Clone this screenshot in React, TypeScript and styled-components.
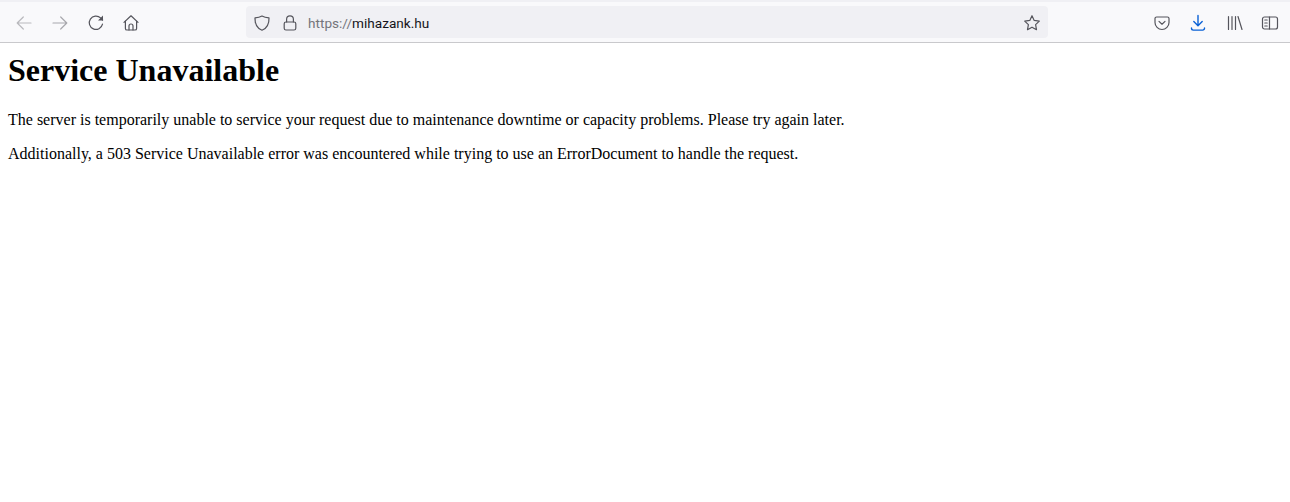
import React from "react";
import styled, { createGlobalStyle } from "styled-components";

const Global = createGlobalStyle`
  html, body { margin: 0; padding: 0; background: #fff; }
  body { width: 1290px; height: 502px; overflow: hidden; }
`;

const Toolbar = styled.header`
  height: 40px;
  border-top: 2px solid #f0f0f4;
  border-bottom: 1px solid #c9c9cc;
  background: #f9f9fb;
  display: flex;
  align-items: center;
  font-family: Roboto, "Open Sans", sans-serif;
`;

const NavGroup = styled.nav`
  width: 246px;
  flex: none;
  display: flex;
  align-items: center;
  padding: 2px 0 0 15px;
  box-sizing: border-box;
`;

const ToolIcon = styled.svg<{ $gap?: number; $color?: string }>`
  width: 18px;
  height: 18px;
  flex: none;
  margin-right: ${(p) => p.$gap ?? 0}px;
  fill: none;
  stroke: ${(p) => p.$color ?? "#55555c"};
  stroke-width: 1.2;
  stroke-linecap: round;
  stroke-linejoin: round;
`;

const UrlBar = styled.div`
  width: 802px;
  height: 32px;
  flex: none;
  border-radius: 4px;
  background: #f0f0f4;
  display: flex;
  align-items: center;
  padding: 2px 7px 0;
  box-sizing: border-box;
`;

const UrlText = styled.div`
  flex: 1;
  font-size: 13.6px;
  color: #15141a;
  white-space: nowrap;
`;

const Scheme = styled.span`
  color: #75757c;
`;

const RightGroup = styled.div`
  flex: 1;
  display: flex;
  align-items: center;
  padding: 2px 0 0 105px;
`;

const Page = styled.main`
  padding: 9px 8px 0;
  font-family: "Liberation Serif", "Times New Roman", serif;
  font-size: 16px;
  color: #000;
`;

const Title = styled.h1`
  margin: 0 0 22px;
  font-size: 32px;
  font-weight: 700;
  line-height: 37px;
`;

const Para = styled.p`
  margin: 0 0 16px;
  line-height: 18px;
`;

export default function App() {
  return (
    <>
      <Global />
      <Toolbar>
        <NavGroup>
          <ToolIcon viewBox="0 0 18 18" $gap={18} $color="#b9b9bd">
            <path d="M16 9H2.200M8.300 3 2.200 9l6.100 6" />
          </ToolIcon>
          <ToolIcon viewBox="0 0 18 18" $gap={18} $color="#a8a8ad">
            <path d="M2 9h13.800M9.700 3l6.100 6-6.100 6" />
          </ToolIcon>
          <ToolIcon viewBox="0 0 18 18" $gap={17}>
            <path d="M15.500 10.200A6.700 6.700 0 1 1 13.600 3.900L15.600 6" />
            <path d="M16 1.500V6.500H11" fill="#55555c" stroke="none" />
          </ToolIcon>
          <ToolIcon viewBox="0 0 18 18">
            <path d="M2 8.400 9 1.800l7 6.600" />
            <path d="M3.400 7.200v7.200a1.600 1.600 0 0 0 1.600 1.600h8a1.600 1.600 0 0 0 1.600-1.600V7.200" />
            <path d="M7 16v-4a2 2 0 0 1 4 0v4" />
          </ToolIcon>
        </NavGroup>
        <UrlBar>
          <ToolIcon viewBox="0 0 18 18" $gap={10}>
            <path d="M9 2c1.900 1.100 4.200 1.700 7 1.900.200 5.700-1.600 10.100-7 12.300C3.600 14 1.800 9.600 2 3.900 4.800 3.700 7.100 3.100 9 2Z" />
          </ToolIcon>
          <ToolIcon viewBox="0 0 18 18" $gap={9}>
            <rect x="3.200" y="8" width="11.600" height="8" rx="1.800" />
            <path d="M5.600 8V5.200a3.400 3.400 0 0 1 6.800 0V8" />
          </ToolIcon>
          <UrlText>
            <Scheme>https://</Scheme>mihazank.hu
          </UrlText>
          <ToolIcon viewBox="0 0 18 18">
            <path d="m9 1.700 2.200 4.700 5.100.7-3.700 3.500.9 5.100L9 13.200l-4.500 2.500.9-5.100-3.700-3.500 5.100-.7Z" />
          </ToolIcon>
        </UrlBar>
        <RightGroup>
          <ToolIcon viewBox="0 0 18 18" $gap={18}>
            <path d="M3.600 3h10.800A1.600 1.600 0 0 1 16 4.600v3.900a7 7 0 0 1-14 0V4.600A1.600 1.600 0 0 1 3.600 3Z" />
            <path d="m6 7.400 3 2.800 3-2.800" />
          </ToolIcon>
          <ToolIcon viewBox="0 0 18 18" $gap={19} $color="#0b62d6">
            <path d="M9 1.500v10M4.800 7.500 9 11.700l4.200-4.200" strokeWidth="1.400" />
            <path d="M2.500 14v.3a1.800 1.800 0 0 0 1.800 1.800h9.400a1.800 1.800 0 0 0 1.800-1.800V14" strokeWidth="1.400" />
          </ToolIcon>
          <ToolIcon viewBox="0 0 18 18" $gap={17}>
            <path d="M2.500 2.500v13M6 2.500v13M9.500 2.500v13M12 2.500l4 13" />
          </ToolIcon>
          <ToolIcon viewBox="0 0 18 18">
            <rect x="1.500" y="3" width="15" height="12" rx="2" />
            <path d="M8.500 3v12M3.800 6h2.400M3.800 9h2.400M3.800 12h2.400" />
          </ToolIcon>
        </RightGroup>
      </Toolbar>
      <Page>
        <Title>Service Unavailable</Title>
        <Para>The server is temporarily unable to service your request due to maintenance downtime or capacity problems. Please try again later.</Para>
        <Para>Additionally, a 503 Service Unavailable error was encountered while trying to use an ErrorDocument to handle the request.</Para>
      </Page>
    </>
  );
}
